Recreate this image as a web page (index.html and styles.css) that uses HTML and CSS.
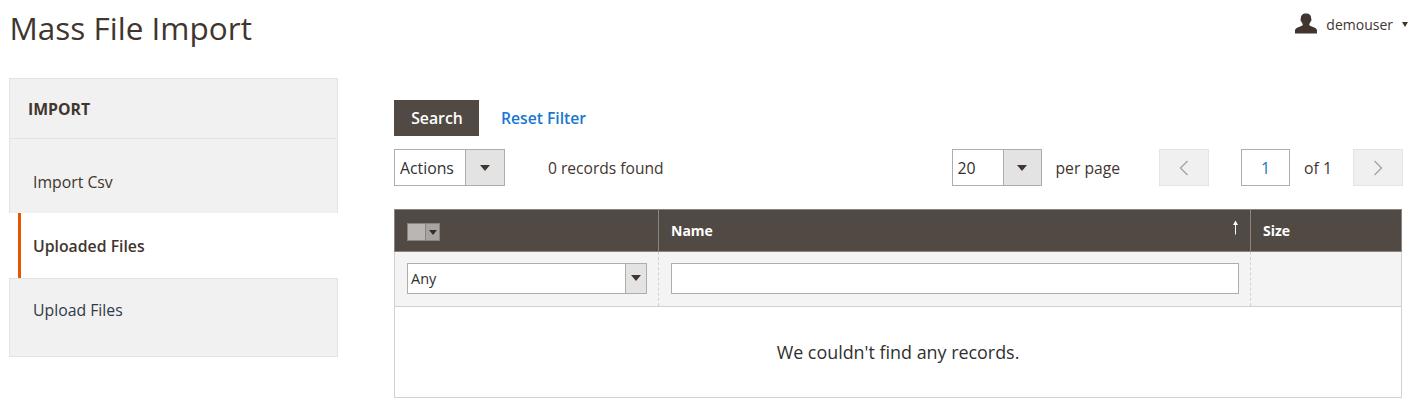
FILE: index.html
```html
<!DOCTYPE html>
<html lang="en">
<head>
  <meta charset="UTF-8">
  <title>Mass File Import</title>
  <link rel="stylesheet" href="styles.css">
</head>
<body>
  <header class="page-header">
    <h1>Mass File Import</h1>
    <div class="user">
      <svg class="user-icon" width="24" height="22" viewBox="0 0 24 22"><path d="M1 20.500 V17.500 C1 15.500 3 14.600 5.500 13.800 C7.500 13.200 8.800 12.600 8.800 11.500 C8.800 10.800 7.800 10 7.300 8.500 C6.800 8.200 6.500 7.500 6.500 6.800 C6.500 6.200 6.700 6 6.900 5.800 C6.500 2.500 8.500 0.500 12 0.500 C15.500 0.500 17.500 2.500 17.100 5.800 C17.300 6 17.500 6.200 17.500 6.800 C17.500 7.500 17.200 8.200 16.700 8.500 C16.200 10 15.200 10.800 15.200 11.500 C15.200 12.600 16.500 13.200 18.500 13.800 C21 14.600 23 15.500 23 17.500 V20.500 Z" fill="#41362f"/></svg>
      <span>demouser</span>
      <i class="caret caret-small"></i>
    </div>
  </header>

  <div class="content">
    <aside class="sidebar">
      <div class="sidebar-title">IMPORT</div>
      <ul class="tabs">
        <li class="tab tab-first"><a href="#">Import Csv</a></li>
        <li class="tab tab-active"><a href="#">Uploaded Files</a></li>
        <li class="tab tab-last"><a href="#">Upload Files</a></li>
      </ul>
    </aside>

    <main class="main">
      <div class="filter-actions">
        <button class="btn-search">Search</button>
        <a class="reset-link" href="#">Reset Filter</a>
      </div>

      <div class="toolbar">
        <div class="select select-actions">
          <span class="select-value">Actions</span>
          <span class="select-arrow"><i class="caret"></i></span>
        </div>
        <span class="records">0 records found</span>
        <div class="pager">
          <div class="select select-perpage">
            <span class="select-value">20</span>
            <span class="select-arrow"><i class="caret"></i></span>
          </div>
          <span class="per-page">per page</span>
          <span class="page-btn page-prev">
            <svg width="10" height="16" viewBox="0 0 10 16"><path d="M8.500 1 L1.500 8 L8.500 15" fill="none" stroke="#a5a5a5" stroke-width="1.400"/></svg>
          </span>
          <input class="page-input" type="text" value="1">
          <span class="page-of">of 1</span>
          <span class="page-btn page-next">
            <svg width="10" height="16" viewBox="0 0 10 16"><path d="M1.500 1 L8.500 8 L1.500 15" fill="none" stroke="#a5a5a5" stroke-width="1.400"/></svg>
          </span>
        </div>
      </div>

      <table class="grid">
        <thead>
          <tr class="grid-head">
            <th class="col-check">
              <div class="mass-select"><span class="mass-box"></span><span class="mass-arrow"><i class="caret caret-small"></i></span></div>
            </th>
            <th class="col-name">Name
              <svg class="sort-arrow" width="7" height="15" viewBox="0 0 7 15"><path d="M3.500 0.500 L6 5 H4 V14.500 H3 V5 H1 Z" fill="#fff"/></svg>
            </th>
            <th class="col-size">Size</th>
          </tr>
          <tr class="grid-filters">
            <td>
              <div class="select select-any">
                <span class="select-value">Any</span>
                <span class="select-arrow"><i class="caret"></i></span>
              </div>
            </td>
            <td><input class="name-input" type="text"></td>
            <td></td>
          </tr>
        </thead>
        <tbody>
          <tr>
            <td class="empty" colspan="3">We couldn't find any records.</td>
          </tr>
        </tbody>
      </table>
    </main>
  </div>
</body>
</html>
```

FILE: styles.css
```css
/* Reset styles */
* {
  margin: 0;
  padding: 0;
  box-sizing: border-box;
}

body {
  font-family: 'Open Sans', sans-serif;
  font-size: 15.8px;
  background-color: #fff;
  color: #41362f;
  overflow: hidden;
}

a {
  text-decoration: none;
}

.page-header {
  display: flex;
  justify-content: space-between;
  height: 78px;
  padding: 4px 0 0 9.5px;
}

.page-header h1 {
  font-size: 31.5px;
  font-weight: 400;
  line-height: 48px;
}

.user {
  display: flex;
  align-items: center;
  height: 40px;
  font-size: 14px;
}

.user-icon {
  margin-right: 8px;
}

.user .caret {
  margin-left: 9px;
  border-width: 5px 3.5px 0;
}

.caret {
  display: inline-block;
  border-style: solid;
  border-width: 6px 5px 0;
  border-color: #41362f transparent transparent;
}

.caret-small {
  border-width: 5px 4px 0;
}

/* Sidebar */
.content {
  display: flex;
  align-items: flex-start;
  padding-left: 9px;
}

.sidebar {
  width: 329px;
  height: 279px;
  background-color: #f1f1f1;
  border: 1px solid #e3e3e3;
}

.sidebar-title {
  height: 60px;
  padding-left: 18px;
  border-bottom: 1px solid #e3e3e3;
  font-size: 15.8px;
  font-weight: 700;
  line-height: 60px;
}

.tabs {
  list-style: none;
}

.tab a {
  display: block;
  padding-left: 23px;
  color: #41362f;
}

.tab-first {
  height: 75px;
  border-bottom: 1px solid #e3e3e3;
}

.tab-first a {
  padding-top: 32px;
}

.tab-active {
  height: 66px;
  margin: -1px -1px 0 -1px;
  padding-left: 9px;
  background-color: #fff;
  border-bottom: 1px solid #e3e3e3;
}

.tab-active a {
  height: 65px;
  padding-left: 12px;
  border-left: 3px solid #eb5202;
  font-weight: 600;
  line-height: 67px;
}

.tab-last a {
  padding-top: 20px;
  color: #303a4a;
}

/* Main column */
.main {
  width: 1008px;
  margin-left: 56px;
  padding-top: 22px;
}

.filter-actions {
  display: flex;
  align-items: center;
  margin-bottom: 13px;
}

.btn-search {
  width: 85px;
  height: 36px;
  padding-left: 1px;
  background-color: #514943;
  color: #fff;
  border: none;
  font-family: inherit;
  font-size: 15.8px;
  font-weight: 600;
}

.reset-link {
  margin-left: 22px;
  color: #1976d2;
  font-size: 15.7px;
  font-weight: 600;
}

.toolbar {
  display: flex;
  align-items: center;
  height: 37px;
  margin-bottom: 23px;
}

.select {
  display: flex;
  background-color: #fff;
  border: 1px solid #adadad;
}

.select-value {
  flex: 1;
  padding-left: 5px;
  color: #303030;
}

.select-arrow {
  display: flex;
  align-items: center;
  justify-content: center;
  background-color: #e3e3e3;
  border-left: 1px solid #adadad;
}

.select-actions {
  width: 111px;
  height: 37px;
  line-height: 37px;
}

.select-actions .select-arrow {
  width: 39px;
}

.records {
  margin-left: 43px;
  font-size: 15.6px;
  line-height: 34px;
}

.pager {
  display: flex;
  align-items: center;
  margin-left: auto;
  margin-right: -1px;
}

.select-perpage {
  width: 90px;
  height: 37px;
  line-height: 37px;
}

.select-perpage .select-arrow {
  width: 38px;
}

.per-page {
  margin-left: 14px;
  font-size: 15.7px;
}

.page-btn {
  display: flex;
  align-items: center;
  justify-content: center;
  width: 50px;
  height: 37px;
  background-color: #f0f0f0;
  border: 1px solid #e3e3e3;
}

.page-prev {
  margin-left: 39px;
}

.page-input {
  width: 49px;
  height: 37px;
  margin-left: 32px;
  border: 1px solid #adadad;
  font-family: inherit;
  font-size: 16px;
  color: #1979c3;
  text-align: center;
}

.page-of {
  margin-left: 14px;
  margin-right: 21px;
}

/* Grid */
.grid {
  width: 1008px;
  border-collapse: collapse;
  table-layout: fixed;
}

.grid-head th {
  height: 42px;
  background-color: #514943;
  color: #fff;
  border: 1px solid #8a837f;
  font-size: 14px;
  font-weight: 700;
  text-align: left;
  padding-left: 12px;
}

.col-check {
  width: 264px;
}

.col-size {
  width: 151px;
}

.col-name {
  position: relative;
}

.sort-arrow {
  position: absolute;
  top: 10px;
  right: 11px;
}

.mass-select {
  display: flex;
  width: 33px;
  height: 18px;
  margin-top: 3px;
  border: 1px solid #8a837f;
}

.mass-box {
  width: 17px;
  background-color: #b9b6b3;
}

.mass-arrow {
  display: flex;
  align-items: center;
  justify-content: center;
  flex: 1;
  background-color: #a8a4a1;
  border-left: 1px solid #8a837f;
}

.mass-arrow .caret {
  border-top-color: #303030;
}

.grid-filters td {
  height: 55px;
  padding: 0 11px 0 12px;
  background-color: #f4f4f4;
  border-left: 1px dashed #d1d1d1;
  border-right: 1px dashed #d1d1d1;
  border-bottom: 1px solid #d1d1d1;
}

.grid-filters td:first-child {
  border-left: 1px solid #d1d1d1;
}

.grid-filters td:last-child {
  border-right: 1px solid #d1d1d1;
}

.select-any {
  height: 31px;
  margin-bottom: 2px;
  font-size: 14.5px;
  line-height: 29px;
}

.select-any .select-value {
  padding-left: 3px;
}

.select-any .select-arrow {
  width: 21px;
}

.name-input {
  display: block;
  width: 100%;
  height: 31px;
  margin-bottom: 2px;
  border: 1px solid #adadad;
}

.empty {
  height: 91px;
  border: 1px solid #d1d1d1;
  text-align: center;
  font-size: 17.9px;
  color: #303030;
}
```
